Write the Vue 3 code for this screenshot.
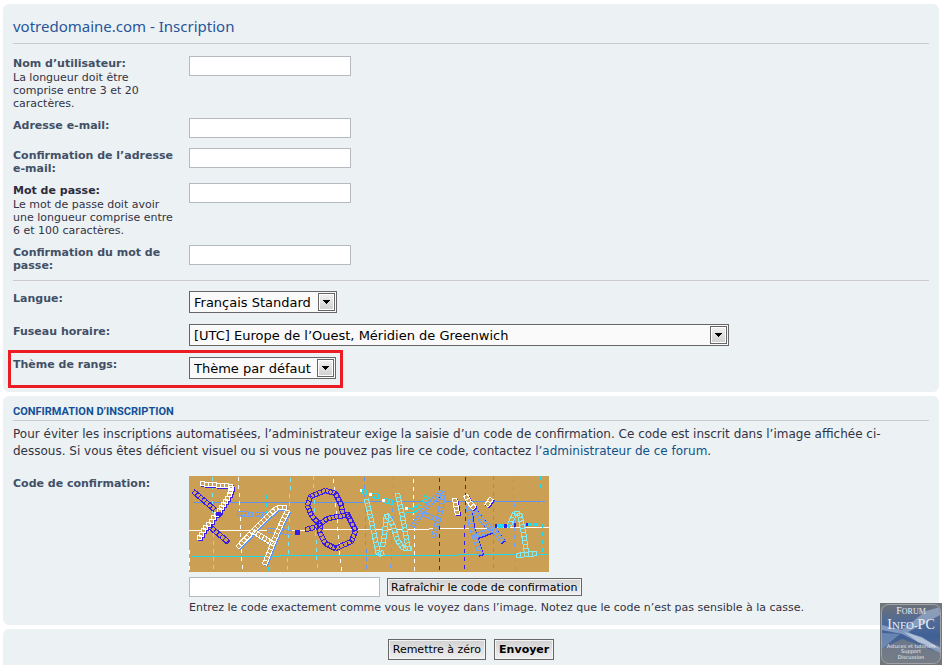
<script setup>
import { ref } from 'vue'

const accountFields = [
  { id: 'username', type: 'text', label: 'Nom d’utilisateur:', hint: 'La longueur doit être comprise entre 3 et 20 caractères.' },
  { id: 'email', type: 'email', label: 'Adresse e-mail:' },
  { id: 'email-confirm', type: 'email', label: 'Confirmation de l’adresse e-mail:' },
  { id: 'password', type: 'password', label: 'Mot de passe:', dark: true, hint: 'Le mot de passe doit avoir une longueur comprise entre 6 et 100 caractères.' },
  { id: 'password-confirm', type: 'password', label: 'Confirmation du mot de passe:' },
]

const values = ref({})

const preferences = [
  { id: 'lang', label: 'Langue:', option: 'Français Standard', size: 'medium' },
  { id: 'tz', label: 'Fuseau horaire:', option: '[UTC] Europe de l’Ouest, Méridien de Greenwich', size: 'wide' },
  { id: 'ranks', label: 'Thème de rangs:', option: 'Thème par défaut', size: 'small', marked: true },
]

// Solid guide lines of the captcha: x, y, length, colour
const guides = [
  { x: 4, y: 26, w: 172, c: '#5e94f4' },
  { x: 176, y: 25, w: 180, c: '#5e94f4' },
  { x: 0, y: 54, w: 120, c: '#ffffff' },
  { x: 120, y: 53, w: 120, c: '#ffffff' },
  { x: 240, y: 52, w: 60, c: '#ffffff' },
  { x: 300, y: 51, w: 60, c: '#ffffff' },
  { x: 2, y: 80, w: 89, c: '#1fdcf0' },
  { x: 91, y: 79, w: 178, c: '#1fdcf0' },
  { x: 269, y: 78, w: 90, c: '#1fdcf0' },
]

// Dashed lines: start x, end x, first dash, colour
const dashed = [
  { a: 0, b: 0, y: 74, c: '#ffffff' },
  { a: 23, b: 24, y: 1, c: '#72e8f4' },
  { a: 49, b: 53, y: 1, c: '#ffffff' },
  { a: 76, b: 79, y: 3, c: '#1fdcf0' },
  { a: 101, b: 98, y: 2, c: '#72e8f4' },
  { a: 124, b: 128, y: 0, c: '#72e8f4' },
  { a: 144, b: 152, y: 3, c: '#ffffff' },
  { a: 175, b: 177, y: 1, c: '#5e94f4' },
  { a: 204, b: 201, y: 0, c: '#6ea0fa' },
  { a: 224, b: 225, y: 3, c: '#ffffff' },
  { a: 250, b: 250, y: 2, c: '#3a1ce8' },
  { a: 276, b: 275, y: 1, c: '#3a1ce8' },
  { a: 304, b: 304, y: 0, c: '#5e94f4' },
  { a: 324, b: 326, y: 3, c: '#6ea0fa' },
  { a: 351, b: 354, y: 0, c: '#1fdcf0' },
]

const dashes = dashed.flatMap(({ a, b, y, c }) => {
  const out = []
  for (let top = y; top < 96; top += 8) {
    out.push({ x: Math.round(a + ((b - a) * top) / 96), y: top, h: Math.min(4, 96 - top), c })
  }
  return out
})

// Letter strokes, each a list of polylines drawn as ladders of small boxes
const strokes = [
  { c: '#3a1ce8', s: '#3a1ce8', lines: [[4, 15, 31, 38], [19, 49, 38, 65]] },
  { c: '#6ea0fa', lines: [[48, 37, 63, 38], [66, 38, 80, 39], [78, 54, 102, 56]] },
  { c: '#ffffff', s: '#3a1ce8', squares: true, lines: [[11, 7, 43, 10, 39, 20, 31, 32, 23, 43, 15, 52, 9, 63]] },
  { c: '#ffffff', s: '#5e94f4', lines: [[48, 71, 64, 54, 79, 39, 88, 31, 97, 31], [98, 34, 91, 49, 84, 65, 75, 88], [64, 55, 83, 67]] },
  { c: '#3a1ce8', lines: [[131, 49, 122, 39, 118, 29, 121, 20, 136, 14, 146, 17, 152, 29, 153, 37], [126, 51, 138, 42, 160, 38], [131, 47, 130, 56, 136, 67, 146, 72, 162, 65, 166, 54, 158, 38], [116, 53, 125, 51]] },
  { c: '#1fdcf0', lines: [[173, 15, 177, 16], [182, 19, 189, 20], [195, 24, 203, 26], [216, 34, 224, 34, 231, 29], [235, 26, 237, 20]] },
  { c: '#80eef6', lines: [[177, 23, 182, 45, 189, 78, 194, 76], [193, 70, 195, 58, 197, 38, 203, 48, 208, 64, 214, 72, 222, 72], [208, 17, 213, 40, 219, 74]] },
  { c: '#6ea0fa', lines: [[223, 50, 234, 34, 252, 15], [254, 15, 251, 35, 244, 61], [233, 37, 250, 44]] },
  { c: '#6ea0fa', s: '#3a1ce8', lines: [[279, 30, 282, 51, 291, 78], [283, 32, 294, 46, 304, 53, 313, 65], [285, 60, 303, 53]] },
  { c: '#ffffff', s: '#3a1ce8', lines: [[265, 22, 268, 38], [276, 19, 280, 26, 285, 32], [302, 22, 297, 29]] },
  { c: '#80eef6', lines: [[320, 49, 325, 37, 330, 37, 334, 56, 337, 76], [327, 79, 347, 77]] },
]

function cells(points, squares) {
  const out = []
  for (let i = 0; i < points.length - 2; i += 2) {
    const [x1, y1, x2, y2] = points.slice(i, i + 4)
    const length = Math.hypot(x2 - x1, y2 - y1)
    const n = Math.max(1, Math.round(length / 4))
    const half = length / n / 2
    const ux = (x2 - x1) / length
    const uy = (y2 - y1) / length
    for (let k = 0; k < n; k++) {
      const cx = x1 + ((x2 - x1) * (k + 0.5)) / n
      const cy = y1 + ((y2 - y1) * (k + 0.5)) / n
      if (squares) {
        out.push(`M${Math.round(cx) - 1.5} ${Math.round(cy) - 1.5}h4v4h-4z`)
        continue
      }
      const corners = [[-1, -1], [1, -1], [1, 1], [-1, 1]].map(([a, b]) => {
        const px = cx + a * half * ux - b * 2.2 * uy + 0.5
        const py = cy + a * half * uy + b * 2.2 * ux + 0.5
        return `${px.toFixed(1)} ${py.toFixed(1)}`
      })
      out.push(`M${corners.join('L')}z`)
    }
  }
  return out.join('')
}

const letters = strokes.map(({ c, s, lines, squares }) => ({
  c,
  s,
  d: lines.map((line) => cells(line, squares)).join(''),
}))
</script>

<template>
  <main class="page">
    <section class="panel">
      <h2>votredomaine.com - Inscription</h2>
      <div class="group">
        <div v-for="f in accountFields" :key="f.id" class="row">
          <div class="term">
            <label :for="f.id" :class="{ dark: f.dark }">{{ f.label }}</label>
            <span v-if="f.hint" class="hint">{{ f.hint }}</span>
          </div>
          <input :id="f.id" v-model="values[f.id]" class="field" :type="f.type" />
        </div>
      </div>
      <div class="group preferences">
        <div v-for="p in preferences" :key="p.id" class="row" :class="{ marked: p.marked }">
          <div class="term"><label :for="p.id">{{ p.label }}</label></div>
          <span class="picker" :class="p.size">
            <select :id="p.id"><option>{{ p.option }}</option></select>
            <span class="arrow">
              <svg width="7" height="4" viewBox="0 0 7 4" shape-rendering="crispEdges" aria-hidden="true">
                <path d="M0 0h7v1H0zM1 1h5v1H1zM2 2h3v1H2zM3 3h1v1H3z" />
              </svg>
            </span>
          </span>
        </div>
      </div>
    </section>

    <section class="panel confirm">
      <h3>Confirmation d’inscription</h3>
      <p class="intro">
        Pour éviter les inscriptions automatisées, l’administrateur exige la saisie d’un code de confirmation. Ce code est inscrit dans l’image affichée ci-dessous. Si vous êtes déficient visuel ou si vous ne pouvez pas lire ce code, contactez <a href="#">l’administrateur de ce forum</a>.
      </p>
      <div class="row">
        <div class="term"><label for="code">Code de confirmation:</label></div>
        <div class="code">
          <svg class="captcha" width="360" height="96" viewBox="0 0 360 96" shape-rendering="crispEdges" aria-hidden="true">
            <rect width="360" height="96" fill="#cba055" />
            <rect v-for="g in guides" :key="`g${g.x}-${g.y}`" :x="g.x" :y="g.y" :width="g.w" height="1" :fill="g.c" />
            <rect v-for="d in dashes" :key="`d${d.x}-${d.y}`" :x="d.x" :y="d.y" width="1" :height="d.h" :fill="d.c" />
            <g v-for="l in letters" :key="l.d">
              <path v-if="l.s" :d="l.d" :fill="l.s" :stroke="l.s" transform="translate(1 1)" />
              <path :d="l.d" fill="#cba055" :stroke="l.c" />
            </g>
            <path d="M27 36h5v4h-5zM106 54h5v5h-5zM306 48h2v4h-2zM315 48h3v4h-3zM325 47h2v4h-2zM337 47h2v3h-2z" fill="#3a1ce8" />
            <path d="M309 48h5v4h-5zM319 48h2v4h-2zM339 47h4v3h-4zM344 47h4v3h-4z" fill="#1fdcf0" />
            <path d="M180 17h3v3h-3zM193 23h3v3h-3zM216 31h3v3h-3zM171 13h2v3h-2z" fill="#ffffff" />
          </svg>
          <div class="entry">
            <input id="code" class="field code-field" type="text" />
            <button type="button" class="refresh">Rafraîchir le code de confirmation</button>
          </div>
          <span class="note">Entrez le code exactement comme vous le voyez dans l’image. Notez que le code n’est pas sensible à la casse.</span>
        </div>
      </div>
    </section>

    <section class="panel actions">
      <button type="reset">Remettre à zéro</button>
      <button type="submit" class="strong">Envoyer</button>
    </section>

    <svg class="badge" width="62" height="62" viewBox="0 0 62 62" role="img" aria-label="Forum Info-PC">
      <defs>
        <linearGradient id="sky" x1="0" y1="0" x2="0" y2="1">
          <stop offset="0" stop-color="#6a7079" />
          <stop offset=".3" stop-color="#4f6a98" />
          <stop offset=".55" stop-color="#3f6096" />
          <stop offset="1" stop-color="#747a84" />
        </linearGradient>
        <clipPath id="frame"><rect x="2" y="2" width="58" height="58" rx="7" /></clipPath>
      </defs>
      <rect width="62" height="62" fill="#71767b" />
      <g clip-path="url(#frame)">
        <rect x="2" y="2" width="58" height="58" fill="url(#sky)" />
        <path d="M2 22L22 27L46 8L60 4V12L38 24L28 29L60 44V50L22 31L2 27z" fill="#a9bdd8" opacity=".6" />
        <path d="M2 30L20 31L2 46z" fill="#8fa9cc" opacity=".5" />
        <path d="M24 29L42 34L60 46L38 39z" fill="#dbe4ee" opacity=".55" />
        <path d="M2 46L22 36L60 50V60H2z" fill="#767d87" opacity=".8" />
      </g>
      <rect x="1.5" y="1.5" width="59" height="59" rx="7" fill="none" stroke="#a0a4a8" />
      <g fill="#eceff3" text-anchor="middle">
        <text x="31" y="11" class="brand"><tspan class="cap">F</tspan>ORUM</text>
        <text x="31" y="26" class="brand large"><tspan class="cap">I</tspan>NFO-<tspan class="cap">PC</tspan></text>
        <g class="motto">
          <text x="31" y="45">Astuces et tutoriels</text>
          <text x="31" y="50">Support</text>
          <text x="31" y="56">Discussion</text>
        </g>
      </g>
    </svg>
  </main>
</template>

<style>
body {
  background: #ffffff;
}
</style>

<style scoped>
.page {
  box-sizing: border-box;
  position: relative;
  display: flex;
  flex-direction: column;
  gap: 4px;
  min-height: 100vh;
  padding: 4px 4px 0 3px;
  color: #333344;
  font-family: Verdana, "DejaVu Sans", sans-serif;
  font-size: 11px;
  line-height: 13px;
}

.panel {
  padding: 10px;
  background: #ecf1f3;
  border-radius: 6px;
}

h2 {
  margin: 0 0 12px;
  padding: 1px 0 6px;
  border-bottom: 1px solid #cccccc;
  color: #28559a;
  font-family: "Trebuchet MS", "Noto Sans", sans-serif;
  font-size: 15px;
  font-weight: 400;
  line-height: 22px;
}

h3 {
  margin: 0 0 5px;
  padding-bottom: 2px;
  border-bottom: 1px solid #cccccc;
  color: #115098;
  font-family: Roboto, Arial, sans-serif;
  font-size: 11px;
  font-weight: 700;
  line-height: 13px;
  text-transform: uppercase;
}

.group {
  display: flex;
  flex-direction: column;
  gap: 8px;
}

.preferences {
  gap: 11px;
  margin-top: 8px;
  padding: 10px 0 3px;
  border-top: 1px solid #cccccc;
}

.row {
  display: grid;
  grid-template-columns: 164px minmax(0, 1fr);
  column-gap: 12px;
  align-items: start;
  min-height: 22px;
}

.term {
  padding-top: 1px;
}

label {
  display: block;
  color: #425067;
  font-weight: 700;
}

.dark {
  color: #2c2c3c;
}

.hint {
  display: block;
  margin-top: 1px;
}

.note {
  display: block;
}

.field {
  box-sizing: border-box;
  width: 162px;
  height: 20px;
  padding: 2px;
  border: 1px solid #b4bac0;
  background: #ffffff;
  font: inherit;
}

.marked {
  position: relative;
  width: fit-content;
}

.marked::after {
  content: "";
  position: absolute;
  inset: -7px -7px -9px -5px;
  border: 3px solid #ed1c24;
  pointer-events: none;
}

.picker {
  position: relative;
  display: flex;
}

.medium {
  width: 148px;
}

.wide {
  width: 540px;
}

.small {
  width: 147px;
}

select {
  box-sizing: border-box;
  width: 100%;
  height: 22px;
  padding: 0 20px 0 4px;
  appearance: none;
  border: 1px solid #666666;
  border-radius: 0;
  background: #fafafa;
  color: #000000;
  font-family: inherit;
  font-size: 13px;
}

.arrow {
  position: absolute;
  top: 2px;
  right: 2px;
  bottom: 2px;
  box-sizing: border-box;
  display: grid;
  place-items: center;
  width: 17px;
  border: 1px solid #666666;
  background: linear-gradient(#f2f2f2, #cfcfcf);
  box-shadow: inset 0 0 0 1px #ffffff;
  pointer-events: none;
}

.confirm {
  padding: 9px 10px 11px;
}

.intro {
  margin: 0 0 16px;
  font-size: 12px;
  line-height: 17px;
}

a {
  color: #105289;
  text-decoration: none;
}

.captcha {
  display: block;
}

.entry {
  display: flex;
  align-items: center;
  gap: 7px;
  margin: 5px 0 4px;
}

.code-field {
  width: 191px;
}

button {
  box-sizing: border-box;
  height: 21px;
  padding: 0 4px;
  border: 1px solid #666666;
  background: linear-gradient(#d2d2d2, #efefef);
  box-shadow: inset 0 0 0 1px #f4f4f4;
  color: #000000;
  font-family: inherit;
  font-size: 11px;
}

.refresh {
  height: 18px;
  padding: 0 3px;
}

.actions {
  display: flex;
  flex: 1;
  align-items: flex-start;
  justify-content: center;
  gap: 8px;
  padding-bottom: 5px;
  border-bottom-left-radius: 0;
  border-bottom-right-radius: 0;
}

.strong {
  font-weight: 700;
}

.badge {
  position: absolute;
  right: 1px;
  bottom: 0;
}

.brand {
  font-family: "Liberation Serif", serif;
  font-size: 8px;
  font-weight: 400;
}

.brand .cap {
  font-size: 10px;
}

.large {
  font-size: 11px;
}

.large .cap {
  font-size: 14px;
}

.motto {
  font-family: "DejaVu Sans", sans-serif;
  font-size: 5px;
}
</style>
